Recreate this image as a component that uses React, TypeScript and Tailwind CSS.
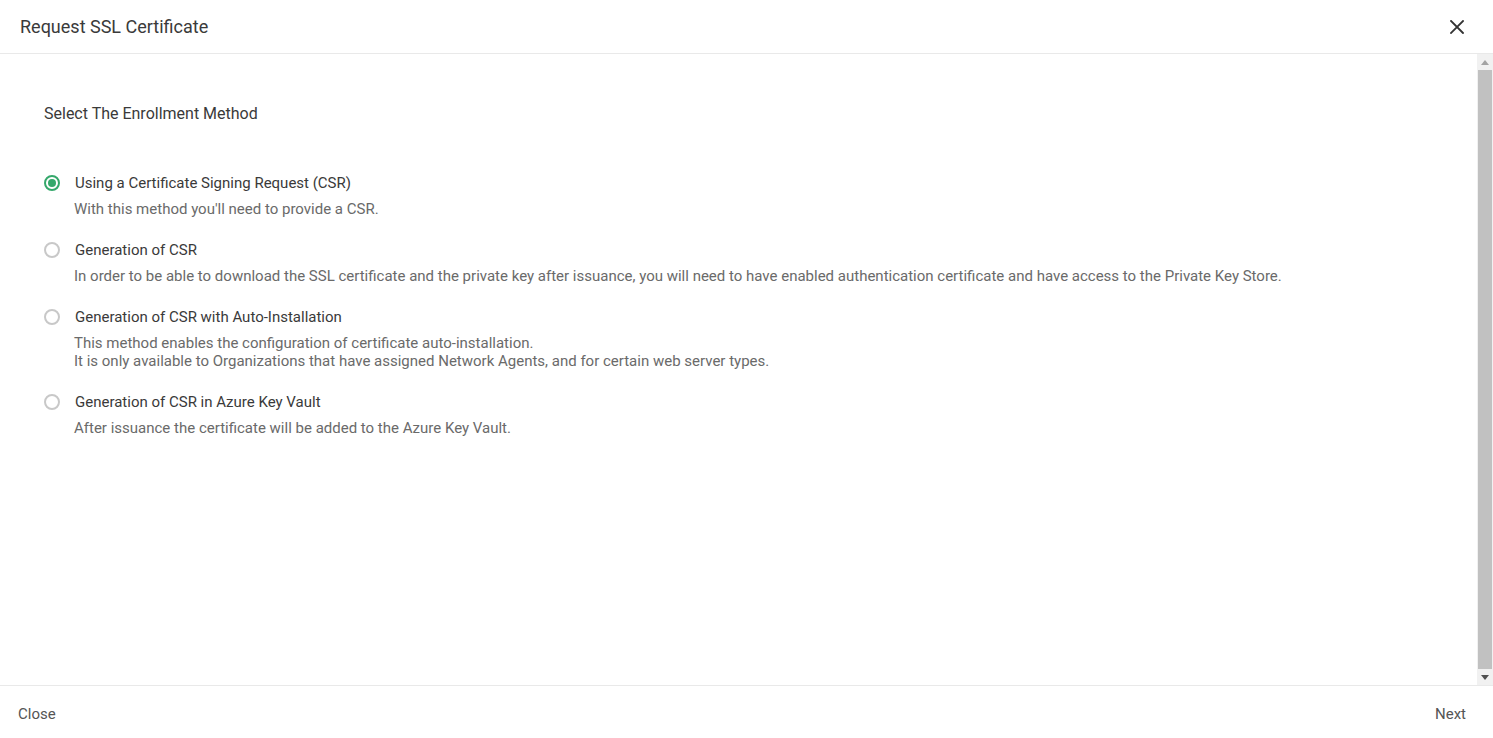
import React from "react";

const options = [
  {
    label: "Using a Certificate Signing Request (CSR)",
    desc: ["With this method you'll need to provide a CSR."],
    checked: true,
  },
  {
    label: "Generation of CSR",
    desc: [
      "In order to be able to download the SSL certificate and the private key after issuance, you will need to have enabled authentication certificate and have access to the Private Key Store.",
    ],
  },
  {
    label: "Generation of CSR with Auto-Installation",
    desc: [
      "This method enables the configuration of certificate auto-installation.",
      "It is only available to Organizations that have assigned Network Agents, and for certain web server types.",
    ],
  },
  {
    label: "Generation of CSR in Azure Key Vault",
    desc: ["After issuance the certificate will be added to the Azure Key Vault."],
  },
];

function Radio({ checked }: { checked?: boolean }) {
  return checked ? (
    <span className="flex h-[16px] w-[16px] items-center justify-center rounded-full border-2 border-[#35a86b]">
      <span className="h-[8px] w-[8px] rounded-full bg-[#35a86b]" />
    </span>
  ) : (
    <span className="h-[16px] w-[16px] rounded-full border-2 border-[#c8c8c8]" />
  );
}

export default function App() {
  return (
    <div
      className="flex h-[738px] w-[1493px] flex-col bg-white"
      style={{ fontFamily: "Roboto, 'Noto Sans', sans-serif" }}
    >
      <header className="flex h-[54px] shrink-0 items-center justify-between border-b border-[#e9e9e9] pl-[20px] pr-[28px]">
        <h1 className="text-[18px] leading-[24px] text-[#3a3a3a]">Request SSL Certificate</h1>
        <button className="flex h-[16px] w-[16px] items-center justify-center">
          <svg width="14" height="14" viewBox="0 0 14 14" fill="none">
            <path d="M1 1L13 13M13 1L1 13" stroke="#333" strokeWidth="1.8" strokeLinecap="square" />
          </svg>
        </button>
      </header>

      <div className="flex min-h-0 flex-1">
        <main className="flex-1 pl-[44px] pt-[50px]">
          <h2 className="text-[16px] leading-[20px] text-[#3a3a3a]">Select The Enrollment Method</h2>
          <div className="mt-[49px] flex flex-col gap-[22px]">
            {options.map((o) => (
              <div key={o.label} className="flex flex-col">
                <div className="flex h-[20px] items-center">
                  <span className="flex w-[31px] items-center">
                    <Radio checked={o.checked} />
                  </span>
                  <span className="text-[15px] leading-[20px] text-[#3a3a3a]">{o.label}</span>
                </div>
                <div className="mt-[7px] pl-[30px] text-[15px] leading-[18px] text-[#6a6a6a]">
                  {o.desc.map((d) => (
                    <div key={d}>{d}</div>
                  ))}
                </div>
              </div>
            ))}
          </div>
        </main>
        <div className="flex w-[16px] flex-col bg-[#f1f1f1]">
          <div className="flex h-[16px] items-center justify-center">
            <svg width="8" height="5" viewBox="0 0 8 5">
              <path d="M0 5L4 0L8 5Z" fill="#a3a3a3" />
            </svg>
          </div>
          <div className="mx-[1px] flex-1 bg-[#c1c1c1]" />
          <div className="flex h-[16px] items-center justify-center">
            <svg width="8" height="5" viewBox="0 0 8 5">
              <path d="M0 0L8 0L4 5Z" fill="#505050" />
            </svg>
          </div>
        </div>
      </div>

      <footer className="flex h-[53px] shrink-0 items-center justify-between border-t border-[#e9e9e9] pl-[18px] pr-[27px] pt-[4px]">
        <button className="text-[15px] leading-[20px] text-[#555555]">Close</button>
        <button className="text-[15px] leading-[20px] text-[#555555]">Next</button>
      </footer>
    </div>
  );
}
